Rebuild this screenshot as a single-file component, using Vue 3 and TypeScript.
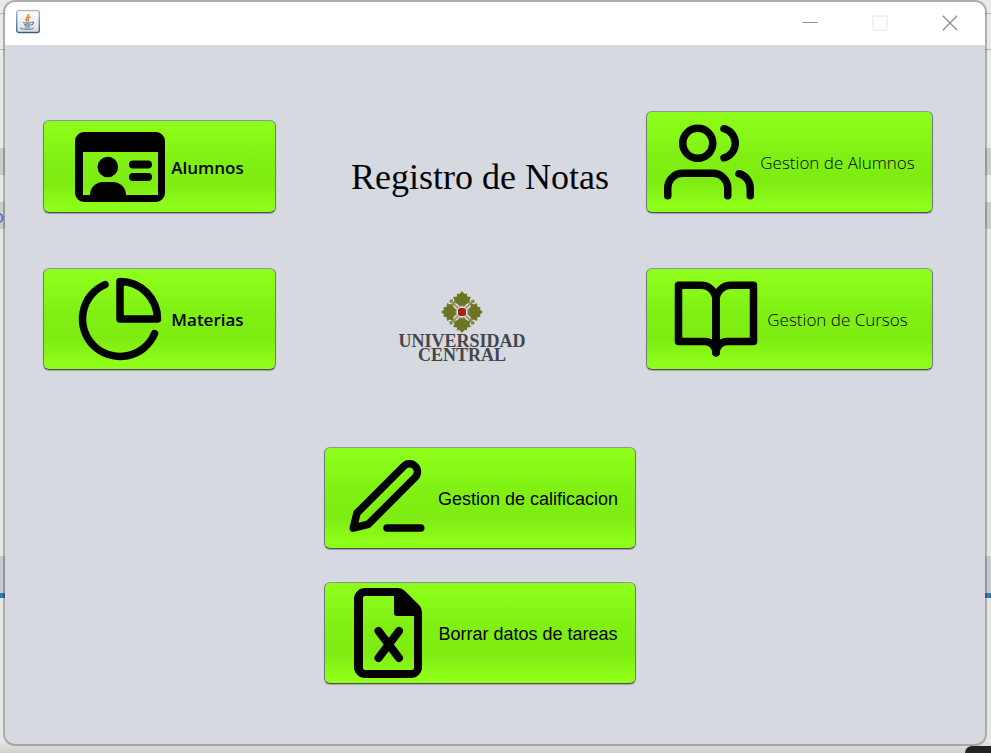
<script setup lang="ts">
import { ref } from 'vue'

type Shape = { d: string; fill?: boolean }
type Action = {
  id: string
  label: string
  viewBox: string
  strokeWidth: number
  shapes: Shape[]
}

const actions: Action[] = [
  {
    id: 'alumnos',
    label: 'Alumnos',
    viewBox: '0 0 90 90',
    strokeWidth: 8,
    shapes: [
      { fill: true, d: 'M9 10H81A9 9 0 0 1 90 19V71A9 9 0 0 1 81 80H9A9 9 0 0 1 0 71V19A9 9 0 0 1 9 10ZM8 30V73H83V30Z' },
      { fill: true, d: 'M22.500 45a10.300 10.300 0 1 0 20.600 0a10.300 10.300 0 1 0-20.600 0Z' },
      { fill: true, d: 'M15 74V73A13 13 0 0 1 28 60H38A13 13 0 0 1 51 73V74Z' },
      { d: 'M58 42.500H73M58 55H73' },
    ],
  },
  {
    id: 'materias',
    label: 'Materias',
    viewBox: '0 0 24 24',
    strokeWidth: 2,
    shapes: [{ d: 'M21.21 15.89A10 10 0 1 1 8 2.83' }, { d: 'M22 12A10 10 0 0 0 12 2v10z' }],
  },
  {
    id: 'gestion-alumnos',
    label: 'Gestion de Alumnos',
    viewBox: '0 0 24 24',
    strokeWidth: 2,
    shapes: [
      { d: 'M17 21v-2a4 4 0 0 0-4-4H5a4 4 0 0 0-4 4v2' },
      { d: 'M5 7a4 4 0 1 0 8 0a4 4 0 1 0-8 0z' },
      { d: 'M23 21v-2a4 4 0 0 0-3-3.87' },
      { d: 'M16 3.13a4 4 0 0 1 0 7.75' },
    ],
  },
  {
    id: 'gestion-cursos',
    label: 'Gestion de Cursos',
    viewBox: '0 0 24 24',
    strokeWidth: 2,
    shapes: [
      { d: 'M2 3h6a4 4 0 0 1 4 4v14a3 3 0 0 0-3-3H2z' },
      { d: 'M22 3h-6a4 4 0 0 0-4 4v14a3 3 0 0 1 3-3h7z' },
    ],
  },
  {
    id: 'calificacion',
    label: 'Gestion de calificacion',
    viewBox: '0 0 24 24',
    strokeWidth: 2,
    shapes: [{ d: 'M12 20h9' }, { d: 'M16.5 3.5a2.121 2.121 0 0 1 3 3L7 19l-4 1 1-4L16.5 3.5z' }],
  },
  {
    id: 'borrar',
    label: 'Borrar datos de tareas',
    viewBox: '0 0 90 90',
    strokeWidth: 8,
    shapes: [
      { fill: true, d: 'M23 0H56Q60 0 63 3L77 17Q80 20 80 24V79A11 11 0 0 1 69 90H23A11 11 0 0 1 12 79V11A11 11 0 0 1 23 0ZM23 8Q21 8 21 10V80Q21 82 23 82H70Q72 82 72 80V28H55Q52 28 52 25V8Z' },
      { d: 'M36.500 43L57 70M57 43L36.500 70' },
    ],
  },
]

const selected = ref('')
</script>

<template>
  <div class="desktop">
    <span class="editor-text" aria-hidden="true">O</span>
    <main class="window">
      <header class="titlebar">
        <svg class="java" viewBox="0 0 24 24" role="img" aria-label="Java">
          <defs>
            <linearGradient id="tile" x1="0" y1="0" x2="0" y2="1">
              <stop offset="0" stop-color="#ffffff" />
              <stop offset="1" stop-color="#dedede" />
            </linearGradient>
            <linearGradient id="tileEdge" x1="0" y1="0" x2="0" y2="1">
              <stop offset="0" stop-color="#9db4c8" />
              <stop offset="1" stop-color="#375a75" />
            </linearGradient>
          </defs>
          <rect x="0.7" y="0.7" width="22.6" height="21.8" rx="2" fill="url(#tile)" stroke="url(#tileEdge)" stroke-width="1.3" />
          <path d="M12.500 4C13.500 6.500 8 7.500 11 11.500M14.500 6.800C10.500 8.500 13.500 9.500 11.500 11.500" fill="none" stroke="#e9812d" stroke-width="1.5" />
          <path d="M7 12.500Q11 13.600 15 12.600M8 14.600Q11 15.500 14.500 14.700M9 16.700Q11 17.300 14 16.700M15.500 12.200Q18.500 11.800 17 14Q16.500 14.800 15 15.200M5.500 17.700Q3 19 10 19.200Q17.500 19.200 17.500 17.700" fill="none" stroke="#537fa5" stroke-width="1.2" />
        </svg>
        <div class="controls">
          <button type="button" aria-label="Minimizar">
            <svg viewBox="0 0 16 16"><path d="M0.500 7.500H15.500" stroke="#8f8f8f" /></svg>
          </button>
          <button type="button" aria-label="Maximizar" disabled>
            <svg viewBox="0 0 16 16"><rect x="1" y="1" width="14" height="14" rx="1" fill="none" stroke="#ebebeb" stroke-width="1.3" /></svg>
          </button>
          <button type="button" aria-label="Cerrar">
            <svg viewBox="0 0 16 16"><path d="M0.800 0.800L15.200 15.200M15.200 0.800L0.800 15.200" stroke="#8c8c8c" stroke-width="1.3" /></svg>
          </button>
        </div>
      </header>

      <div class="content">
        <h1 class="title">Registro de Notas</h1>

        <figure class="brand">
          <svg class="emblem" viewBox="-22 -22 44 44" aria-hidden="true">
            <g v-for="angle in [0, 90, 180, 270]" :key="angle" :transform="`rotate(${angle})`">
              <path d="M0-21L2.500-18L5-18.500L5-15.500L9-15L7.500-12L9-9L5-8.500L2-5.500H-2L-5-8.500L-9-9L-7.500-12L-9-15L-5-15.500L-5-18.500L-2.500-18Z" fill="#6c7622" />
              <path d="M4-4L9-9M6.500-10.500L8.500-8.500L10.500-6.500M10-12V-9.800H12.500" fill="none" stroke="#8b9352" stroke-width="1.6" />
              <circle cx="11" cy="-11" r="1.6" fill="#7f8941" />
            </g>
            <circle r="6" fill="#e6dcd9" stroke="#a0a387" />
            <rect x="-4" y="-4" width="8" height="8" rx="2.5" fill="#a92115" />
          </svg>
          <figcaption>UNIVERSIDAD<br />CENTRAL</figcaption>
        </figure>

        <button
          v-for="action in actions"
          :key="action.id"
          type="button"
          class="action"
          :class="action.id"
          @click="selected = action.id"
        >
          <svg class="icon" :viewBox="action.viewBox" aria-hidden="true">
            <path
              v-for="shape in action.shapes"
              :key="shape.d"
              :d="shape.d"
              :fill="shape.fill ? '#000' : 'none'"
              fill-rule="evenodd"
              :stroke="shape.fill ? 'none' : '#000'"
              :stroke-width="action.strokeWidth"
              stroke-linecap="round"
              stroke-linejoin="round"
            />
          </svg>
          <span class="label">{{ action.label }}</span>
        </button>
      </div>
    </main>
    <div class="corner"></div>
  </div>
</template>

<style>
body {
  background: #e9e9e9;
}
</style>

<style scoped>
.desktop {
  position: relative;
  display: flex;
  box-sizing: border-box;
  min-height: 100vh;
  padding: 0 4px 7px 3px;
  overflow: hidden;
  background: linear-gradient(
    #e9e9e9 13px, #b8b8b8 13px 14px, #e9e9e9 14px 49px, #b8b8b8 49px 50px,
    #e9e9e9 50px 148px, #cbcbcb 148px 175px, #e9e9e9 175px 202px,
    #cbcbcb 202px 229px, #e6e6e4 229px 556px, #c6cacf 556px 593px,
    #3478b4 593px 598px, #e6e6e4 598px 740px, #d0d0d0
  );
}

.editor-text {
  position: absolute;
  top: 208px;
  left: -8px;
  color: #4a62c8;
  font: 15px/20px "Liberation Sans", sans-serif;
}

.window {
  display: flex;
  flex: 1;
  flex-direction: column;
  min-width: 0;
  overflow: hidden;
  border: 2px solid rgba(0, 0, 0, 0.25);
  border-radius: 12px;
  background: #d6d9e0;
  background-clip: padding-box;
}

.titlebar {
  display: flex;
  align-items: center;
  justify-content: space-between;
  height: 43px;
  padding-left: 11px;
  background: #fff;
}

.java {
  width: 24px;
  height: 24px;
  margin-bottom: 3px;
}

.controls {
  display: flex;
}

.controls button {
  display: flex;
  align-items: center;
  justify-content: center;
  width: 70px;
  height: 43px;
  padding: 0;
  border: 0;
  background: none;
}

.controls svg {
  width: 16px;
  height: 16px;
  margin-bottom: 2px;
}

.content {
  display: grid;
  grid-template-columns: 233fr 48fr 312fr 10fr 287fr;
  align-items: center;
  padding: 65px 52px 60px 38px;
}

.title {
  grid-area: 1 / 3;
  margin: 30px 0 0;
  color: #000;
  font: 36px/40px "Liberation Serif", serif;
  text-align: center;
  white-space: nowrap;
}

.brand {
  display: flex;
  grid-area: 2 / 3;
  flex-direction: column;
  align-items: center;
  margin: 68px 36px 0 0;
}

.emblem {
  width: 44px;
  height: 44px;
}

.brand figcaption {
  color: #45464a;
  font: bold 18px/14px "Liberation Serif", serif;
  text-align: center;
}

.action {
  display: flex;
  align-items: center;
  justify-content: center;
  gap: 6px;
  box-sizing: border-box;
  height: 102px;
  padding: 0;
  border: 1px solid #737b80;
  border-top-color: #8f959d;
  border-bottom-color: #4b5156;
  border-radius: 6px;
  background: linear-gradient(#8fff1a, #80f014 45%, #7eec12 70%, #8fff1a 96%);
  box-shadow: 0 1px 1px rgba(0, 0, 0, 0.25);
  color: #000;
  font: 18px/24px "Liberation Sans", sans-serif;
  white-space: nowrap;
}

.icon {
  flex: none;
  width: 90px;
  height: 90px;
}

.label {
  padding-top: 2px;
}

.alumnos,
.materias {
  font: 600 17px/24px "Open Sans", sans-serif;
}

.gestion-alumnos,
.gestion-cursos {
  font: 300 17px/24px "Open Sans", sans-serif;
}

.alumnos {
  grid-area: 1 / 1;
  height: 93px;
  margin-top: 10px;
}

.gestion-alumnos {
  grid-area: 1 / 5;
}

.materias {
  grid-area: 2 / 1;
  margin-top: 55px;
}

.gestion-cursos {
  grid-area: 2 / 5;
  margin-top: 55px;
}

.calificacion {
  grid-area: 3 / 3;
  margin-top: 77px;
}

.borrar {
  grid-area: 4 / 3;
  margin-top: 33px;
}

.corner {
  position: absolute;
  right: 0;
  bottom: 0;
  width: 26px;
  height: 7px;
  border-top-left-radius: 9px;
  background: #222;
}
</style>
